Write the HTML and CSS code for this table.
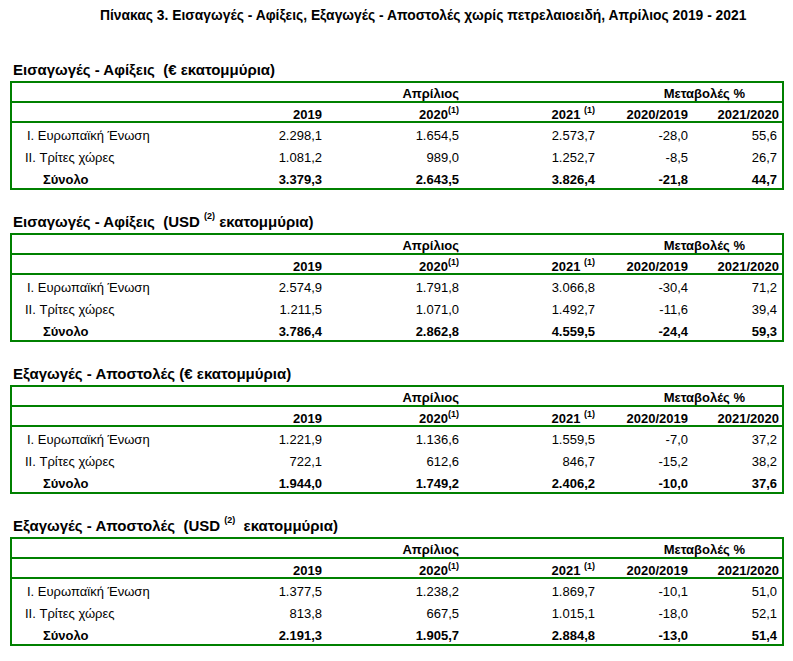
FILE: index.html
```html
<!DOCTYPE html>
<html>

<head>
    <title>Πίνακας 3</title>
    <link rel="stylesheet" href="styles.css">
</head>

<body>
    <div class="page">
        <h1 class="main-title"><span class="main-title-text">Πίνακας 3. Εισαγωγές - Αφίξεις, Εξαγωγές - Αποστολές χωρίς πετρελαιοειδή, Απρίλιος 2019 - 2021</span></h1>

        <div class="section">
            <div class="section-title">Εισαγωγές - Αφίξεις&nbsp; (€ εκατομμύρια)</div>
            <table class="data">
                <colgroup>
                    <col class="c-label">
                    <col class="c-2019">
                    <col class="c-2020">
                    <col class="c-2021">
                    <col class="c-ch1">
                    <col class="c-ch2">
                </colgroup>
                <tr class="head-1">
                    <td></td>
                    <td colspan="2" class="month">Απρίλιος</td>
                    <td></td>
                    <td colspan="2" class="changes">Μεταβολές %</td>
                </tr>
                <tr class="head-2">
                    <td></td>
                    <td>2019</td>
                    <td>2020<sup>(1)</sup></td>
                    <td>2021 <sup>(1)</sup></td>
                    <td>2020/2019</td>
                    <td class="last">2021/2020</td>
                </tr>
                <tr class="row">
                    <td class="label eu">I. Ευρωπαϊκή Ένωση</td>
                    <td>2.298,1</td>
                    <td>1.654,5</td>
                    <td>2.573,7</td>
                    <td>-28,0</td>
                    <td class="last">55,6</td>
                </tr>
                <tr class="row">
                    <td class="label other">II. Τρίτες χώρες</td>
                    <td>1.081,2</td>
                    <td>989,0</td>
                    <td>1.252,7</td>
                    <td>-8,5</td>
                    <td class="last">26,7</td>
                </tr>
                <tr class="row total">
                    <td class="label sum">Σύνολο</td>
                    <td>3.379,3</td>
                    <td>2.643,5</td>
                    <td>3.826,4</td>
                    <td>-21,8</td>
                    <td class="last">44,7</td>
                </tr>
            </table>
        </div>

        <div class="section">
            <div class="section-title">Εισαγωγές - Αφίξεις&nbsp; (USD <sup>(2)</sup> εκατομμύρια)</div>
            <table class="data">
                <colgroup>
                    <col class="c-label">
                    <col class="c-2019">
                    <col class="c-2020">
                    <col class="c-2021">
                    <col class="c-ch1">
                    <col class="c-ch2">
                </colgroup>
                <tr class="head-1">
                    <td></td>
                    <td colspan="2" class="month">Απρίλιος</td>
                    <td></td>
                    <td colspan="2" class="changes">Μεταβολές %</td>
                </tr>
                <tr class="head-2">
                    <td></td>
                    <td>2019</td>
                    <td>2020<sup>(1)</sup></td>
                    <td>2021 <sup>(1)</sup></td>
                    <td>2020/2019</td>
                    <td class="last">2021/2020</td>
                </tr>
                <tr class="row">
                    <td class="label eu">I. Ευρωπαϊκή Ένωση</td>
                    <td>2.574,9</td>
                    <td>1.791,8</td>
                    <td>3.066,8</td>
                    <td>-30,4</td>
                    <td class="last">71,2</td>
                </tr>
                <tr class="row">
                    <td class="label other">II. Τρίτες χώρες</td>
                    <td>1.211,5</td>
                    <td>1.071,0</td>
                    <td>1.492,7</td>
                    <td>-11,6</td>
                    <td class="last">39,4</td>
                </tr>
                <tr class="row total">
                    <td class="label sum">Σύνολο</td>
                    <td>3.786,4</td>
                    <td>2.862,8</td>
                    <td>4.559,5</td>
                    <td>-24,4</td>
                    <td class="last">59,3</td>
                </tr>
            </table>
        </div>

        <div class="section">
            <div class="section-title">Εξαγωγές - Αποστολές (€ εκατομμύρια)</div>
            <table class="data">
                <colgroup>
                    <col class="c-label">
                    <col class="c-2019">
                    <col class="c-2020">
                    <col class="c-2021">
                    <col class="c-ch1">
                    <col class="c-ch2">
                </colgroup>
                <tr class="head-1">
                    <td></td>
                    <td colspan="2" class="month">Απρίλιος</td>
                    <td></td>
                    <td colspan="2" class="changes">Μεταβολές %</td>
                </tr>
                <tr class="head-2">
                    <td></td>
                    <td>2019</td>
                    <td>2020<sup>(1)</sup></td>
                    <td>2021 <sup>(1)</sup></td>
                    <td>2020/2019</td>
                    <td class="last">2021/2020</td>
                </tr>
                <tr class="row">
                    <td class="label eu">I. Ευρωπαϊκή Ένωση</td>
                    <td>1.221,9</td>
                    <td>1.136,6</td>
                    <td>1.559,5</td>
                    <td>-7,0</td>
                    <td class="last">37,2</td>
                </tr>
                <tr class="row">
                    <td class="label other">II. Τρίτες χώρες</td>
                    <td>722,1</td>
                    <td>612,6</td>
                    <td>846,7</td>
                    <td>-15,2</td>
                    <td class="last">38,2</td>
                </tr>
                <tr class="row total">
                    <td class="label sum">Σύνολο</td>
                    <td>1.944,0</td>
                    <td>1.749,2</td>
                    <td>2.406,2</td>
                    <td>-10,0</td>
                    <td class="last">37,6</td>
                </tr>
            </table>
        </div>

        <div class="section">
            <div class="section-title">Εξαγωγές - Αποστολές&nbsp; (USD <sup>(2)</sup>&nbsp; εκατομμύρια)</div>
            <table class="data">
                <colgroup>
                    <col class="c-label">
                    <col class="c-2019">
                    <col class="c-2020">
                    <col class="c-2021">
                    <col class="c-ch1">
                    <col class="c-ch2">
                </colgroup>
                <tr class="head-1">
                    <td></td>
                    <td colspan="2" class="month">Απρίλιος</td>
                    <td></td>
                    <td colspan="2" class="changes">Μεταβολές %</td>
                </tr>
                <tr class="head-2">
                    <td></td>
                    <td>2019</td>
                    <td>2020<sup>(1)</sup></td>
                    <td>2021 <sup>(1)</sup></td>
                    <td>2020/2019</td>
                    <td class="last">2021/2020</td>
                </tr>
                <tr class="row">
                    <td class="label eu">I. Ευρωπαϊκή Ένωση</td>
                    <td>1.377,5</td>
                    <td>1.238,2</td>
                    <td>1.869,7</td>
                    <td>-10,1</td>
                    <td class="last">51,0</td>
                </tr>
                <tr class="row">
                    <td class="label other">II. Τρίτες χώρες</td>
                    <td>813,8</td>
                    <td>667,5</td>
                    <td>1.015,1</td>
                    <td>-18,0</td>
                    <td class="last">52,1</td>
                </tr>
                <tr class="row total">
                    <td class="label sum">Σύνολο</td>
                    <td>2.191,3</td>
                    <td>1.905,7</td>
                    <td>2.884,8</td>
                    <td>-13,0</td>
                    <td class="last">51,4</td>
                </tr>
            </table>
        </div>
    </div>
</body>

</html>
```

FILE: styles.css
```css
body {
    margin: 0;
    font-family: "Liberation Sans", Arial, sans-serif;
    font-size: 13px;
    color: #000;
    background-color: #fff;
}

.page {
    width: 774px;
    padding-left: 10px;
}

.main-title {
    margin: 6px 0 0 0;
    padding-left: 90px;
    font-size: 15px;
    line-height: 17px;
    font-weight: bold;
    white-space: nowrap;
}

/* the original heading is set in a condensed face */
.main-title-text {
    display: inline-block;
    transform: scaleX(0.923);
    transform-origin: left center;
}

.section {
    margin-top: 24px;
}

.section:first-of-type {
    margin-top: 39px;
}

.section-title {
    padding-left: 3px;
    margin-bottom: 3px;
    font-size: 15px;
    font-weight: bold;
    line-height: 16px;
    white-space: nowrap;
}

.section-title sup {
    font-size: 9px;
    line-height: 0;
    vertical-align: 8px;
}

.data {
    width: 774px;
    table-layout: fixed;
    border: 2px solid #008000;
    border-spacing: 0;
    box-sizing: border-box;
}

.c-label {
    width: 188px;
}

.c-2019 {
    width: 122px;
}

.c-2020 {
    width: 137px;
}

.c-2021 {
    width: 136px;
}

.c-ch1 {
    width: 93px;
}

.c-ch2 {
    width: 94px;
}

td {
    padding: 0;
    line-height: 13px;
    text-align: right;
    white-space: nowrap;
}

td sup {
    font-size: 9px;
    line-height: 0;
    vertical-align: 6px;
}

.head-1 td,
.head-2 td {
    font-weight: bold;
    border-bottom: 2px solid #008000;
}

.head-1 td {
    padding-top: 4px;
    padding-bottom: 1px;
}

.head-1 .changes {
    padding-right: 37px;
}

.head-2 td {
    padding-top: 5px;
    padding-bottom: 0;
}

.head-2 .last {
    padding-right: 3px;
}

.row td {
    padding-top: 6px;
    padding-bottom: 3px;
}

.row .last {
    padding-right: 5px;
}

.row.total td {
    font-weight: bold;
    padding-bottom: 2px;
}

.label {
    text-align: left;
}

.label.eu {
    padding-left: 15px;
}

.label.other {
    padding-left: 13px;
}

.label.sum {
    padding-left: 31px;
}
```
